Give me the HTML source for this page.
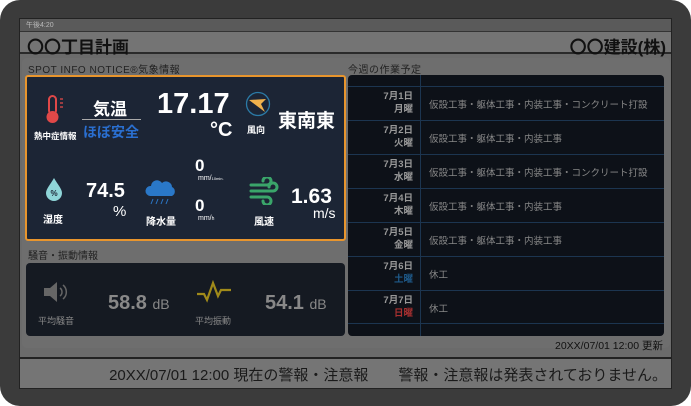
<!DOCTYPE html><html><head><meta charset="utf-8"><style>
*{margin:0;padding:0;box-sizing:border-box}
body{width:691px;height:406px;background:#fff;font-family:"Liberation Sans","Noto Sans CJK JP",sans-serif;position:relative;overflow:hidden}
.a{position:absolute;white-space:nowrap}
.w{color:#fff}
</style></head><body>
<div class="a" style="left:0;top:0;width:691px;height:406px;background:#3b3b3b;border-radius:20px"></div>
<div class="a" style="left:19px;top:18px;width:653px;height:371px;background:#6b6b6b;border:1px solid #222"></div>
<div class="a" style="left:20px;top:19px;width:651px;height:12px;background:#5a5a5a"></div>
<div class="a" style="left:26px;top:20px;font-size:7px;color:#bbb">午後4:20</div>
<div class="a" style="left:20px;top:31px;width:651px;height:23px;background:#747474;border-top:1px solid #333;border-bottom:2px solid #2a2a2a"></div>
<div class="a" style="left:27px;top:33px;font-size:17px;font-weight:bold;color:#111">〇〇丁目計画</div>
<div class="a" style="right:25px;top:33px;font-size:17px;font-weight:bold;color:#111">〇〇建設(株)</div>
<div class="a" style="left:22px;top:58px;width:648px;height:290px;background:#6e6e6e;border-radius:5px"></div>
<div class="a" style="left:28px;top:61px;font-size:10px;color:#222;letter-spacing:.5px">SPOT INFO NOTICE®気象情報</div>
<div class="a" style="left:348px;top:61px;font-size:10px;color:#222;letter-spacing:.5px">今週の作業予定</div>
<!-- weather -->
<div class="a" style="left:25px;top:75px;width:321px;height:166px;background:#1c2535;border:2px solid #e8952d;border-radius:3px"></div>
<svg class="a" style="left:43px;top:95px" width="24" height="30" viewBox="0 0 24 30"><rect x="6" y="1" width="7" height="18" rx="3.5" fill="none" stroke="#e04848" stroke-width="2"/><circle cx="9.5" cy="22" r="6" fill="#e04848"/><g stroke="#e04848" stroke-width="1.3"><line x1="17" y1="4" x2="20" y2="4"/><line x1="17" y1="8" x2="20" y2="8"/><line x1="17" y1="12" x2="20" y2="12"/></g></svg>
<div class="a w" style="left:34px;top:130px;font-size:8.5px;font-weight:bold">熱中症情報</div>
<div class="a w" style="left:93px;top:95px;font-size:17px;font-weight:bold">気温</div>
<div class="a" style="left:82px;top:119px;width:59px;height:1px;background:#aaa"></div>
<div class="a" style="left:83px;top:122px;font-size:14px;font-weight:bold;color:#2a6fd0">ほぼ安全</div>
<div class="a w" style="left:157px;top:88px;font-size:29px;font-weight:bold">17.17</div>
<div class="a w" style="left:210px;top:119px;font-size:20px;font-weight:bold">°C</div>
<svg class="a" style="left:245px;top:91px" width="26" height="26" viewBox="0 0 26 26"><circle cx="13" cy="13" r="11.5" fill="none" stroke="#2b7aa6" stroke-width="1.3"/><path d="M4 9 L21 8 L16 13 L20 21 Z" fill="#f0b14c"/></svg>
<div class="a w" style="left:247px;top:123px;font-size:9px;font-weight:bold">風向</div>
<div class="a w" style="left:278px;top:106px;font-size:19px;font-weight:bold">東南東</div>
<svg class="a" style="left:44px;top:177px" width="20" height="25" viewBox="0 0 20 25"><path d="M10 1 C6 8 2 12 2 16 A8 8 0 0 0 18 16 C18 12 14 8 10 1Z" fill="#8fd5d8"/><text x="10" y="19" font-size="8" text-anchor="middle" fill="#1c2535" font-weight="bold">%</text></svg>
<div class="a w" style="left:43px;top:211px;font-size:10px;font-weight:bold">湿度</div>
<div class="a w" style="left:86px;top:180px;font-size:20px;font-weight:bold">74.5</div>
<div class="a w" style="left:113px;top:203px;font-size:15px">%</div>
<svg class="a" style="left:145px;top:178px" width="32" height="28" viewBox="0 0 32 28"><path d="M5 18 A5 5 0 0 1 6 8 A6 6 0 0 1 17 5 A6 6 0 0 1 27 9 A5 5 0 0 1 27 18Z" fill="#2a78c8"/><g stroke="#2a78c8" stroke-width="1"><line x1="8" y1="21" x2="6" y2="26"/><line x1="13" y1="21" x2="11" y2="26"/><line x1="18" y1="21" x2="16" y2="26"/><line x1="23" y1="21" x2="21" y2="26"/></g></svg>
<div class="a w" style="left:146px;top:213px;font-size:10px;font-weight:bold">降水量</div>
<div class="a w" style="left:195px;top:156px;font-size:17px;font-weight:bold">0</div>
<div class="a w" style="left:198px;top:175px;font-size:7px">mm/<span style="font-size:4px">10min.</span></div>
<div class="a w" style="left:195px;top:196px;font-size:17px;font-weight:bold">0</div>
<div class="a w" style="left:198px;top:215px;font-size:7px">mm/<span style="font-size:5px">h</span></div>
<svg class="a" style="left:249px;top:177px" width="30" height="28" viewBox="0 0 30 28"><g fill="none" stroke="#3aa56a" stroke-width="3" stroke-linecap="round"><path d="M2 8 H18 A4 4 0 1 0 14 4"/><path d="M2 14 H24 A4 4 0 1 0 20 10"/><path d="M2 20 H18 A4 4 0 1 1 14 24"/></g></svg>
<div class="a w" style="left:254px;top:213px;font-size:10px;font-weight:bold">風速</div>
<div class="a w" style="left:291px;top:185px;font-size:21px;font-weight:bold">1.63</div>
<div class="a w" style="left:313px;top:205px;font-size:14px">m/s</div>
<!-- noise -->
<div class="a" style="left:28px;top:247px;font-size:10px;color:#222">騒音・振動情報</div>
<div class="a" style="left:26px;top:263px;width:319px;height:73px;background:#151a22;border-radius:4px"></div>
<svg class="a" style="left:42px;top:280px" width="30" height="24" viewBox="0 0 30 24"><path d="M2 8 H8 L15 2 V22 L8 16 H2Z" fill="#666"/><g fill="none" stroke="#666" stroke-width="1.5"><path d="M18 8 A5 5 0 0 1 18 16"/><path d="M21 5 A9 9 0 0 1 21 19"/></g></svg>
<div class="a" style="left:38px;top:314px;font-size:9px;color:#888">平均騒音</div>
<div class="a" style="left:108px;top:292px;font-size:20px;font-weight:bold;color:#888">58.8 <span style="font-size:14px;font-weight:normal">dB</span></div>
<svg class="a" style="left:196px;top:280px" width="36" height="24" viewBox="0 0 36 24"><path d="M1 14 H8 L11 20 L17 3 L22 16 L25 10 H35" fill="none" stroke="#a08a1a" stroke-width="2.2"/></svg>
<div class="a" style="left:195px;top:314px;font-size:9px;color:#888">平均振動</div>
<div class="a" style="left:265px;top:292px;font-size:20px;font-weight:bold;color:#888">54.1 <span style="font-size:14px;font-weight:normal">dB</span></div>
<!-- schedule -->
<div class="a" style="left:348px;top:75px;width:316px;height:261px;background:#0d1118;border-radius:4px;overflow:hidden">
<div class="a" style="left:72px;top:0;width:1px;height:261px;background:#1c3550"></div>
<div style="position:absolute;left:0;top:11px;width:316px">
<div style="height:34px;border-top:1px solid #1c3550;position:relative"><div class="a" style="right:251px;top:3px;font-size:9.5px;color:#999;text-align:right;line-height:13px;font-weight:bold">7月1日<br>月曜</div><div class="a" style="left:81px;top:10px;font-size:9.5px;color:#888">仮設工事・躯体工事・内装工事・コンクリート打設</div></div>
<div style="height:34px;border-top:1px solid #1c3550;position:relative"><div class="a" style="right:251px;top:3px;font-size:9.5px;color:#999;text-align:right;line-height:13px;font-weight:bold">7月2日<br>火曜</div><div class="a" style="left:81px;top:10px;font-size:9.5px;color:#888">仮設工事・躯体工事・内装工事</div></div>
<div style="height:34px;border-top:1px solid #1c3550;position:relative"><div class="a" style="right:251px;top:3px;font-size:9.5px;color:#999;text-align:right;line-height:13px;font-weight:bold">7月3日<br>水曜</div><div class="a" style="left:81px;top:10px;font-size:9.5px;color:#888">仮設工事・躯体工事・内装工事・コンクリート打設</div></div>
<div style="height:34px;border-top:1px solid #1c3550;position:relative"><div class="a" style="right:251px;top:3px;font-size:9.5px;color:#999;text-align:right;line-height:13px;font-weight:bold">7月4日<br>木曜</div><div class="a" style="left:81px;top:10px;font-size:9.5px;color:#888">仮設工事・躯体工事・内装工事</div></div>
<div style="height:34px;border-top:1px solid #1c3550;position:relative"><div class="a" style="right:251px;top:3px;font-size:9.5px;color:#999;text-align:right;line-height:13px;font-weight:bold">7月5日<br>金曜</div><div class="a" style="left:81px;top:10px;font-size:9.5px;color:#888">仮設工事・躯体工事・内装工事</div></div>
<div style="height:34px;border-top:1px solid #1c3550;position:relative"><div class="a" style="right:251px;top:3px;font-size:9.5px;color:#999;text-align:right;line-height:13px;font-weight:bold">7月6日<br><span style="color:#1e5a8a">土曜</span></div><div class="a" style="left:81px;top:10px;font-size:9.5px;color:#888">休工</div></div>
<div style="height:34px;border-top:1px solid #1c3550;border-bottom:1px solid #1c3550;position:relative"><div class="a" style="right:251px;top:3px;font-size:9.5px;color:#999;text-align:right;line-height:13px;font-weight:bold">7月7日<br><span style="color:#a83030">日曜</span></div><div class="a" style="left:81px;top:10px;font-size:9.5px;color:#888">休工</div></div>
</div></div>
<div class="a" style="right:28px;top:338px;font-size:10.5px;color:#111">20XX/07/01 12:00 更新</div>
<!-- bottom -->
<div class="a" style="left:20px;top:357px;width:651px;height:2px;background:#222"></div>
<div class="a" style="left:20px;top:359px;width:651px;height:29px;background:#757575"></div>
<div class="a" style="right:24px;top:364px;font-size:15px;color:#1a1a1a">20XX/07/01 12:00 現在の警報・注意報　　警報・注意報は発表されておりません。</div>
</body></html>
